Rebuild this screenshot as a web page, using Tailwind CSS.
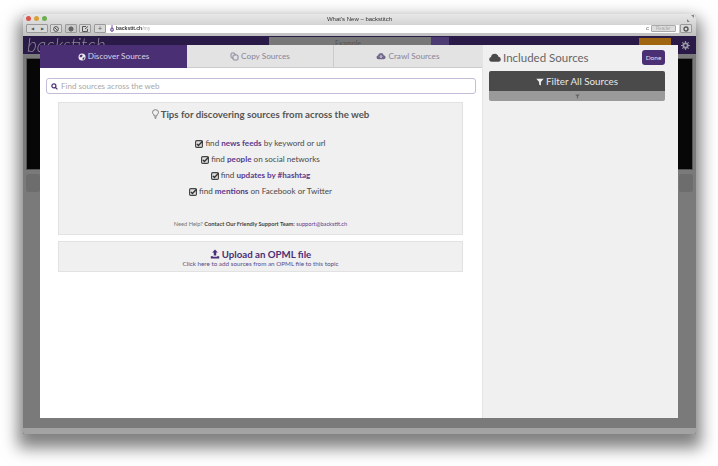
<!DOCTYPE html>
<html lang="en">
<head>
  <meta charset="UTF-8" />
  <title>What's New - backstitch</title>
  <script src="https://cdn.jsdelivr.net/npm/@tailwindcss/browser@4"></script>
</head>
<body class="bg-white w-[718px] h-[466px] overflow-hidden font-['Lato',sans-serif] pl-[23px] pt-[14px]">
  <!-- browser window -->
  <div class="relative w-[673px] h-[420px] flex flex-col rounded-t-[4px] bg-[#7a7a7a] blur-[0.3px] shadow-[0_9px_16px_5px_rgba(0,0,0,0.5)]">
    <!-- chrome -->
    <div class="h-[22px] shrink-0 bg-gradient-to-b from-[#e8e8e8] to-[#c0c0c0] rounded-t-[4px] relative">
      <div class="flex gap-[3px] pl-[3px] pt-[2px]">
        <span class="w-[5px] h-[5px] rounded-full bg-[#d9534b]"></span>
        <span class="w-[5px] h-[5px] rounded-full bg-[#d9a03a]"></span>
        <span class="w-[5px] h-[5px] rounded-full bg-[#6fae50]"></span>
      </div>
      <div class="absolute top-[1px] left-0 right-0 text-center text-[6px] leading-[8px] text-[#333] font-['Liberation_Sans',sans-serif]">What's New &ndash; backstitch</div>
      <svg class="absolute right-[2px] top-[1px]" width="7" height="7" viewBox="0 0 7 7" fill="#888"><path d="M7 0V3L4 0ZM0 7V4L3 7Z"/></svg>
      <div class="absolute top-[10px] left-[3px] right-[4px] flex items-center">
        <div class="w-[22px] h-[9px] flex items-center justify-around rounded-[1px] border border-[#9a9a9a] bg-[#d8d8d8] text-[4px] text-[#555]"><span>◀</span><span>▶</span></div>
        <div class="ml-[2px] w-[12px] h-[9px] flex items-center justify-center rounded-[1px] border border-[#9a9a9a] bg-[#d8d8d8]">
          <svg width="6" height="6" viewBox="0 0 6 6" fill="none" stroke="#555"><circle cx="3" cy="3" r="2.4"/><path d="M1.4 1.4 4.6 4.6"/></svg>
        </div>
        <div class="ml-[3px] w-[12px] h-[9px] flex items-center justify-center rounded-[1px] border border-[#9a9a9a] bg-[#c8c8c8]">
          <svg width="6" height="6" viewBox="0 0 6 6" fill="#666"><rect x="1" y="1" width="4" height="4"/><path d="M0 3H6M3 0V6" stroke="#666"/></svg>
        </div>
        <div class="ml-[2px] w-[12px] h-[9px] flex items-center justify-center rounded-[1px] border border-[#9a9a9a] bg-[#d8d8d8]">
          <svg width="7" height="6" viewBox="0 0 7 6" fill="none" stroke="#555"><path d="M4 .5H.5V5.5H5.5V3M3 3 6 .5"/></svg>
        </div>
        <div class="ml-[3px] w-[12px] h-[9px] rounded-[1px] border border-[#9a9a9a] bg-[#d8d8d8] text-[7px] leading-[7px] text-center text-[#555]">+</div>
        <div class="flex-1 h-[8px] bg-white flex items-center pl-[4px] pr-[3px] text-[5px] font-['Liberation_Sans',sans-serif] font-bold text-[#333]">
          <svg class="mr-[2px]" width="4" height="7" viewBox="0 0 4 7"><path d="M2 0V6M.5 4.5Q.5 6.5 2 6.5 3.5 6.5 3.5 4.5 3.5 3 2 3 .5 3 .5 4.5Z" fill="none" stroke="#5a3a8c" stroke-width="0.8"/></svg>
          backstit.ch<span class="font-normal text-[#aaa]">/my</span>
          <span class="ml-auto mr-[2px] text-[6px] font-normal text-[#666]">c</span>
          <div class="w-[25px] h-[7px] rounded-[1px] border border-[#aaa] bg-[#ddd] text-[4.5px] leading-[5px] text-center font-normal text-[#aaa]">Reader</div>
        </div>
        <div class="ml-[1px] w-[12px] h-[9px] flex items-center justify-center rounded-[1px] border border-[#9a9a9a] bg-[#d8d8d8]">
          <svg width="6" height="6" viewBox="0 0 6 6" fill="none" stroke="#555" stroke-width="1.4"><circle cx="3" cy="3" r="2"/></svg>
        </div>
      </div>
    </div>
    <!-- dimmed app behind the modal -->
    <div class="h-[18px] shrink-0 bg-[#2a1a47] relative overflow-hidden">
      <span class="block text-[#8d8799] italic font-light text-[19px] pl-[4px] leading-[18px]">backstitch</span>
      <div class="absolute left-[246px] top-[1px] w-[162px] h-[17px] bg-[#777] pl-[66px] text-[7px] leading-[12px] text-[#555]">Example</div>
      <div class="absolute left-[408px] top-[1px] w-[18px] h-[17px] bg-[#4c3a72]"></div>
      <div class="absolute left-[616px] top-[2px] w-[32px] h-[16px] bg-[#a0660f]"></div>
      <svg class="absolute left-[658px] top-[5px]" width="9" height="9" viewBox="0 0 9 9" fill="none" stroke="#9a95a5"><circle cx="4.5" cy="4.5" r="2.2" stroke-width="1.8"/><path d="M4.5 0V2M4.5 7V9M0 4.5H2M7 4.5H9M1.3 1.3 2.7 2.7M6.3 6.3 7.7 7.7M7.7 1.3 6.3 2.7M2.7 6.3 1.3 7.7" stroke-width="1.2"/></svg>
    </div>
    <div class="flex-1 px-[3px] pt-[4px] flex flex-col">
      <div class="h-[112px] bg-[#070707] border border-[#555]"></div>
      <div class="flex justify-between mt-[4px]">
        <div class="w-[14px] h-[18px] rounded-[2px] bg-[#6d6d6d]"></div>
        <div class="w-[14px] h-[18px] rounded-[2px] bg-[#6d6d6d]"></div>
      </div>
    </div>
    <div class="h-[6px] shrink-0 bg-[#a3a3a3] rounded-b-[2px]"></div>

    <!-- modal -->
    <div class="absolute left-[17px] top-[31px] w-[638px] h-[373px] bg-white flex text-[#4a4a4a]">
      <div class="w-[442px] shrink-0 flex flex-col">
        <div class="flex h-[23px] text-[8.2px] text-[#8a8399]">
          <div class="w-[147px] bg-[#4b2f75] text-[#d9d3e4] flex items-center justify-center gap-[2px]">
            <svg width="8" height="8" viewBox="0 0 8 8"><circle cx="4" cy="4" r="3.5" fill="#ececec"/><path d="M2 2.2 4.2 1.6 4.6 3 3 4.4 1.5 3.6ZM4.6 5 6.6 4 6 6.4 4.8 6.8Z" fill="#4b2f75"/></svg>
            Discover Sources
          </div>
          <div class="w-[147px] bg-[#e3e3e3] border-b border-[#ccc] border-r flex items-center justify-center gap-[2px]">
            <svg width="9" height="9" viewBox="0 0 9 9" fill="none" stroke="#77708a" stroke-width="0.8"><rect x="3" y="3" width="5" height="5" rx="1"/><path d="M3 6H2Q1 6 1 5V2Q1 1 2 1H4Q5 1 5 2V3"/></svg>
            Copy Sources
          </div>
          <div class="w-[148px] bg-[#e3e3e3] border-b border-[#ccc] flex items-center justify-center gap-[2px]">
            <svg width="10" height="8" viewBox="0 0 10 8"><path d="M2.5 7.2Q.5 7.2.5 5.3 .5 3.8 2 3.5 2.4 1 5 1 7.2 1 7.7 3.2 9.6 3.5 9.6 5.3 9.6 7.2 7.5 7.2Z" fill="#6f668a"/><path d="M5 2.8V5.4M3.8 4.4 5 5.7 6.2 4.4" stroke="#e3e3e3" fill="none" stroke-width="0.9"/></svg>
            Crawl Sources
          </div>
        </div>
        <div class="flex flex-col pt-[10px]">
          <label class="ml-[6px] mr-[6px] h-[16px] rounded-[3px] border border-[#c4bcd8] flex items-center pl-[4px] gap-[3px] text-[8px] text-[#a8a8a8]">
            <svg width="7" height="7" viewBox="0 0 7 7" fill="none" stroke="#4b2f75" stroke-width="1.2"><circle cx="2.9" cy="2.9" r="2"/><path d="M4.4 4.4 6.4 6.4"/></svg>
            Find sources across the web
          </label>
          <div class="ml-[18px] mr-[19px] mt-[8px] h-[133px] bg-[#f0f0f0] border border-[#e2e2e2] flex flex-col items-center">
            <div class="flex items-center gap-[2px] mt-[4px] text-[9.7px] leading-[14px] font-bold text-[#555]">
              <svg width="7" height="10" viewBox="0 0 7 10" fill="none" stroke="#666" stroke-width="0.8"><path d="M2.2 7Q2.2 5.8 1.3 5 .5 4.2.5 3.3.5.7 3.5.7 6.5.7 6.5 3.3 6.5 4.2 5.7 5 4.8 5.8 4.8 7Z"/><path d="M2.4 8.2H4.6M2.8 9.3H4.2"/></svg>
              Tips for discovering sources from across the web
            </div>
            <ul class="mt-[17px] flex flex-col gap-[5px] text-[8.1px] leading-[11px] text-[#4a4a4a] items-center">
              <li class="flex items-center gap-[2px]">
                <svg width="8" height="8" viewBox="0 0 7 7"><rect x=".5" y=".5" width="6" height="6" rx="1" fill="#ddd" stroke="#444"/><path d="M1.6 3.4 3 4.8 6.6 1" fill="none" stroke="#333" stroke-width="1.2"/></svg>
                <span>find <b class="text-[#5a3a8c]">news feeds</b> by keyword or url</span>
              </li>
              <li class="flex items-center gap-[2px]">
                <svg width="8" height="8" viewBox="0 0 7 7"><rect x=".5" y=".5" width="6" height="6" rx="1" fill="#ddd" stroke="#444"/><path d="M1.6 3.4 3 4.8 6.6 1" fill="none" stroke="#333" stroke-width="1.2"/></svg>
                <span>find <b class="text-[#5a3a8c]">people</b> on social networks</span>
              </li>
              <li class="flex items-center gap-[2px]">
                <svg width="8" height="8" viewBox="0 0 7 7"><rect x=".5" y=".5" width="6" height="6" rx="1" fill="#ddd" stroke="#444"/><path d="M1.6 3.4 3 4.8 6.6 1" fill="none" stroke="#333" stroke-width="1.2"/></svg>
                <span>find <b class="text-[#5a3a8c]">updates by #hashtag</b></span>
              </li>
              <li class="flex items-center gap-[2px]">
                <svg width="8" height="8" viewBox="0 0 7 7"><rect x=".5" y=".5" width="6" height="6" rx="1" fill="#ddd" stroke="#444"/><path d="M1.6 3.4 3 4.8 6.6 1" fill="none" stroke="#333" stroke-width="1.2"/></svg>
                <span>find <b class="text-[#5a3a8c]">mentions</b> on Facebook or Twitter</span>
              </li>
            </ul>
            <p class="mt-[23px] text-[5.7px] leading-[8px] text-[#777]">Need Help? <b class="text-[#444]">Contact Our Friendly Support Team:</b> <span class="text-[#5a3a8c]">support@backstit.ch</span></p>
          </div>
          <div class="ml-[18px] mr-[19px] mt-[6px] h-[31px] bg-[#f0f0f0] border border-[#e2e2e2] flex flex-col items-center justify-center text-[#4b2f75]">
            <div class="flex items-center gap-[2px] text-[9.7px] leading-[12px] font-bold mt-[1px]">
              <svg width="10" height="10" viewBox="0 0 10 10" fill="#4b2f75"><path d="M5 .5 7.8 3.4H6.2V6.6H3.8V3.4H2.2ZM.8 7.2H3V7.8H7V7.2H9.2V9.6H.8Z"/></svg>
              Upload an OPML file
            </div>
            <div class="text-[6.3px] leading-[7px] text-[#5a4a85]">Click here to add sources from an OPML file to this topic</div>
          </div>
        </div>
      </div>
      <div class="flex-1 bg-[#f0f0f0] border-l border-[#e4e4e4] pl-[6px] pr-[13px] pt-[5px]">
        <div class="flex items-center h-[15px]">
          <svg width="12" height="9" viewBox="0 0 12 9" fill="#4a4a4a"><path d="M3 8.8Q.2 8.8.2 6.3.2 4.4 2 3.9 2.6.8 5.8.8 8.6.8 9.3 3.6 11.8 4 11.8 6.3 11.8 8.8 9.2 8.8Z"/></svg>
          <span class="ml-[2px] mt-[1px] text-[11.5px] text-[#666]">Included Sources</span>
          <button class="ml-auto w-[23px] h-[15px] rounded-[3px] bg-[#4b2f75] text-[6.5px] text-[#e5e0ee]">Done</button>
        </div>
        <div class="mt-[6px] h-[20px] pt-[1px] bg-[#4a4a4a] rounded-t-[2px] flex items-center justify-center gap-[2px] text-[9.8px] text-[#e8e8e8]">
          <svg width="8" height="8" viewBox="0 0 8 8" fill="#eee"><path d="M.3.8H7.7L4.9 4V7.6L3.1 6.6V4Z"/></svg>
          Filter All Sources
        </div>
        <div class="h-[10px] bg-[#9a9a9a] rounded-b-[2px] flex items-center justify-center">
          <svg width="5" height="5" viewBox="0 0 8 8" fill="#666"><path d="M.3.8H7.7L4.9 4V7.6L3.1 6.6V4Z"/></svg>
        </div>
      </div>
    </div>
  </div>
</body>
</html>
